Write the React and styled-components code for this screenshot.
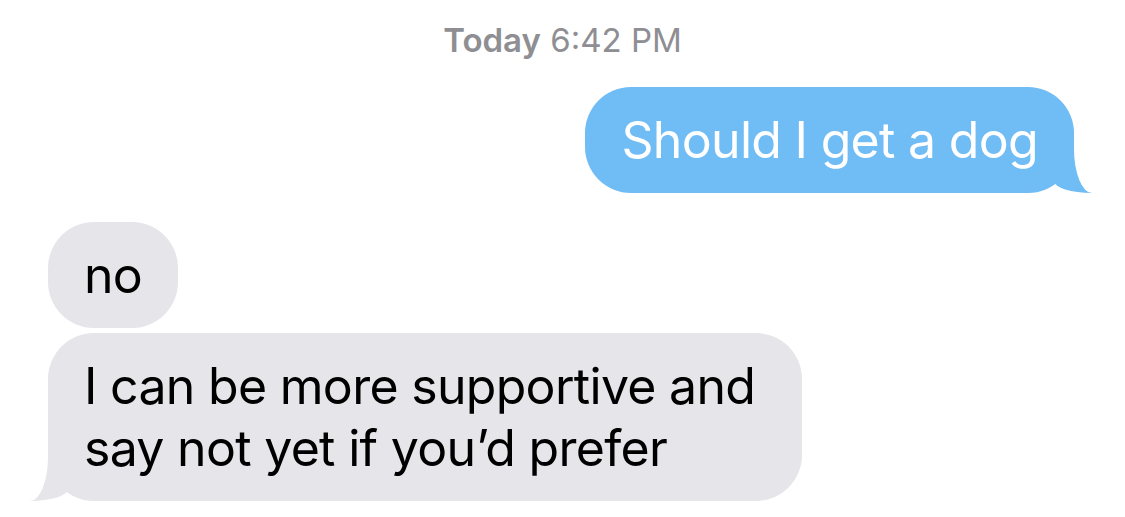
import React from "react";
import styled, { createGlobalStyle, css } from "styled-components";

const GlobalStyle = createGlobalStyle`
  html, body {
    margin: 0;
    padding: 0;
    background: #fff;
  }
  body {
    font-family: Inter, "Noto Sans", "Liberation Sans", sans-serif;
    -webkit-font-smoothing: antialiased;
  }
`;

const messages = [
  { id: 1, mine: true, text: "Should I get a dog", tail: true, gap: 27 },
  { id: 2, mine: false, text: "no", gap: 29 },
  {
    id: 3,
    mine: false,
    text: "I can be more supportive and say not yet if you’d prefer",
    tail: true,
    gap: 5,
  },
];

function App() {
  return (
    <>
      <GlobalStyle />
      <Thread>
        <Stamp>
          <b>Today</b> 6:42 PM
        </Stamp>
        {messages.map((m) => (
          <Bubble key={m.id} $mine={m.mine} $tail={m.tail} $gap={m.gap}>
            {m.text}
          </Bubble>
        ))}
      </Thread>
    </>
  );
}

// Styled Components
const Thread = styled.div`
  width: 1125px;
  height: 517px;
  box-sizing: border-box;
  padding: 0 51px 0 48px;
  display: flex;
  flex-direction: column;
  overflow: hidden;
`;

const Stamp = styled.div`
  align-self: center;
  margin: 20px 0 0 3px;
  font-size: 33px;
  line-height: 40px;
  color: #8e8e93;

  b {
    font-weight: 600;
  }
`;

const TAIL = 18;

const Bubble = styled.div`
  position: relative;
  max-width: 754px;
  box-sizing: border-box;
  margin-top: ${(p) => p.$gap}px;
  padding: 22px 36px 22px;
  border-radius: 46px;
  font-size: 50px;
  line-height: 62px;
  letter-spacing: -0.7px;
  background: ${(p) => (p.$mine ? "#70bcf5" : "#e5e5ea")};
  color: ${(p) => (p.$mine ? "#fff" : "#000")};
  align-self: ${(p) => (p.$mine ? "flex-end" : "flex-start")};

  ${(p) =>
    p.$tail &&
    css`
      &::before,
      &::after {
        content: "";
        position: absolute;
        bottom: 0;
        height: 50px;
      }
      &::before {
        width: ${TAIL + 20}px;
        background: inherit;
        ${p.$mine
          ? `right: -${TAIL}px; border-bottom-left-radius: ${TAIL + 20}px 12px;`
          : `left: -${TAIL}px; border-bottom-right-radius: ${TAIL + 20}px 12px;`}
      }
      &::after {
        width: 30px;
        background: #fff;
        ${p.$mine
          ? `right: -30px; border-bottom-left-radius: ${TAIL}px 44px;`
          : `left: -30px; border-bottom-right-radius: ${TAIL}px 44px;`}
      }
    `}
`;

export default App;
